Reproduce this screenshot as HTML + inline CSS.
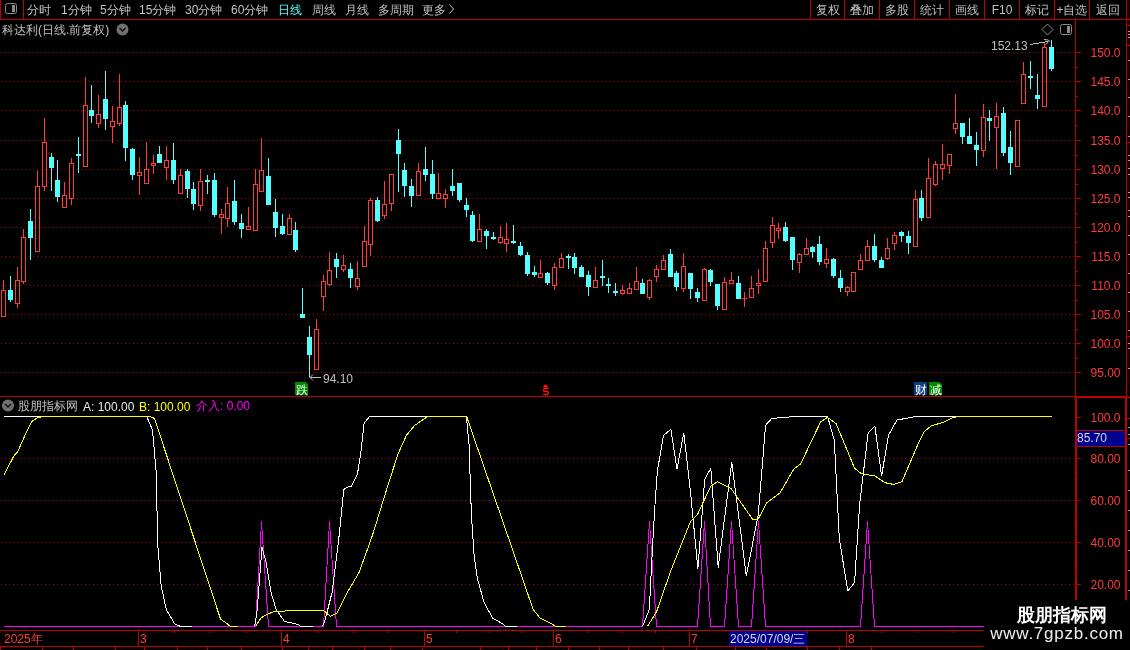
<!DOCTYPE html>
<html><head><meta charset="utf-8"><style>
html,body{margin:0;padding:0;background:#000;width:1130px;height:650px;overflow:hidden}
body{position:relative;font-family:"Liberation Sans",sans-serif;font-size:12px;color:#c0c0c0}
svg{position:absolute;left:0;top:0;will-change:transform} text{font-family:"Liberation Sans",sans-serif}
.t{position:absolute;white-space:nowrap;line-height:12px}
</style></head><body>
<svg width="1130" height="650" viewBox="0 0 1130 650" shape-rendering="crispEdges">
<g><line x1="1" y1="52.5" x2="1075" y2="52.5" stroke="#b40000" stroke-width="1" stroke-dasharray="1 3"/>
<line x1="1" y1="81.5" x2="1075" y2="81.5" stroke="#b40000" stroke-width="1" stroke-dasharray="1 3"/>
<line x1="1" y1="110.5" x2="1075" y2="110.5" stroke="#b40000" stroke-width="1" stroke-dasharray="1 3"/>
<line x1="1" y1="140.5" x2="1075" y2="140.5" stroke="#b40000" stroke-width="1" stroke-dasharray="1 3"/>
<line x1="1" y1="169.5" x2="1075" y2="169.5" stroke="#b40000" stroke-width="1" stroke-dasharray="1 3"/>
<line x1="1" y1="198.5" x2="1075" y2="198.5" stroke="#b40000" stroke-width="1" stroke-dasharray="1 3"/>
<line x1="1" y1="227.5" x2="1075" y2="227.5" stroke="#b40000" stroke-width="1" stroke-dasharray="1 3"/>
<line x1="1" y1="256.5" x2="1075" y2="256.5" stroke="#b40000" stroke-width="1" stroke-dasharray="1 3"/>
<line x1="1" y1="285.5" x2="1075" y2="285.5" stroke="#b40000" stroke-width="1" stroke-dasharray="1 3"/>
<line x1="1" y1="314.5" x2="1075" y2="314.5" stroke="#b40000" stroke-width="1" stroke-dasharray="1 3"/>
<line x1="1" y1="343.5" x2="1075" y2="343.5" stroke="#b40000" stroke-width="1" stroke-dasharray="1 3"/>
<line x1="1" y1="372.5" x2="1075" y2="372.5" stroke="#b40000" stroke-width="1" stroke-dasharray="1 3"/>
<line x1="1" y1="458.5" x2="1075" y2="458.5" stroke="#b40000" stroke-width="1" stroke-dasharray="1 3"/>
<line x1="1" y1="500.5" x2="1075" y2="500.5" stroke="#b40000" stroke-width="1" stroke-dasharray="1 3"/>
<line x1="1" y1="542.5" x2="1075" y2="542.5" stroke="#b40000" stroke-width="1" stroke-dasharray="1 3"/>
<line x1="1" y1="584.5" x2="1075" y2="584.5" stroke="#b40000" stroke-width="1" stroke-dasharray="1 3"/>
<rect x="3" y="280" width="1" height="10" fill="#ff3c3c"/>
<rect x="1.5" y="290.5" width="4" height="26" fill="none" stroke="#ff3c3c" stroke-width="1"/>
<rect x="10" y="276" width="1" height="26" fill="#54ffff"/>
<rect x="8" y="290" width="5" height="10" fill="#54ffff"/>
<rect x="17" y="267" width="1" height="13" fill="#ff3c3c"/>
<rect x="17" y="303" width="1" height="5" fill="#ff3c3c"/>
<rect x="15.5" y="280.5" width="4" height="23" fill="none" stroke="#ff3c3c" stroke-width="1"/>
<rect x="23" y="229" width="1" height="8" fill="#ff3c3c"/>
<rect x="23" y="281" width="1" height="3" fill="#ff3c3c"/>
<rect x="21.5" y="237.5" width="4" height="44" fill="none" stroke="#ff3c3c" stroke-width="1"/>
<rect x="30" y="209" width="1" height="51" fill="#54ffff"/>
<rect x="28" y="221" width="5" height="17" fill="#54ffff"/>
<rect x="37" y="171" width="1" height="15" fill="#ff3c3c"/>
<rect x="35.5" y="186.5" width="4" height="65" fill="none" stroke="#ff3c3c" stroke-width="1"/>
<rect x="44" y="118" width="1" height="24" fill="#ff3c3c"/>
<rect x="44" y="186" width="1" height="5" fill="#ff3c3c"/>
<rect x="42.5" y="142.5" width="4" height="44" fill="none" stroke="#ff3c3c" stroke-width="1"/>
<rect x="51" y="153" width="1" height="38" fill="#54ffff"/>
<rect x="49" y="157" width="5" height="11" fill="#54ffff"/>
<rect x="57" y="160" width="1" height="42" fill="#54ffff"/>
<rect x="55" y="180" width="5" height="17" fill="#54ffff"/>
<rect x="64" y="182" width="1" height="13" fill="#ff3c3c"/>
<rect x="62.5" y="195.5" width="4" height="12" fill="none" stroke="#ff3c3c" stroke-width="1"/>
<rect x="71" y="158" width="1" height="5" fill="#ff3c3c"/>
<rect x="71" y="198" width="1" height="7" fill="#ff3c3c"/>
<rect x="69.5" y="163.5" width="4" height="35" fill="none" stroke="#ff3c3c" stroke-width="1"/>
<rect x="78" y="137" width="1" height="36" fill="#54ffff"/>
<rect x="76" y="154" width="5" height="2" fill="#54ffff"/>
<rect x="85" y="77" width="1" height="28" fill="#ff3c3c"/>
<rect x="83.5" y="105.5" width="4" height="61" fill="none" stroke="#ff3c3c" stroke-width="1"/>
<rect x="91" y="85" width="1" height="38" fill="#54ffff"/>
<rect x="89" y="110" width="5" height="6" fill="#54ffff"/>
<rect x="98" y="95" width="1" height="19" fill="#ff3c3c"/>
<rect x="98" y="123" width="1" height="5" fill="#ff3c3c"/>
<rect x="96.5" y="114.5" width="4" height="9" fill="none" stroke="#ff3c3c" stroke-width="1"/>
<rect x="105" y="71" width="1" height="59" fill="#54ffff"/>
<rect x="103" y="99" width="5" height="20" fill="#54ffff"/>
<rect x="112" y="106" width="1" height="15" fill="#ff3c3c"/>
<rect x="112" y="126" width="1" height="17" fill="#ff3c3c"/>
<rect x="110.5" y="121.5" width="4" height="5" fill="none" stroke="#ff3c3c" stroke-width="1"/>
<rect x="119" y="74" width="1" height="33" fill="#ff3c3c"/>
<rect x="119" y="123" width="1" height="3" fill="#ff3c3c"/>
<rect x="117.5" y="107.5" width="4" height="16" fill="none" stroke="#ff3c3c" stroke-width="1"/>
<rect x="125" y="101" width="1" height="60" fill="#54ffff"/>
<rect x="123" y="105" width="5" height="43" fill="#54ffff"/>
<rect x="132" y="148" width="1" height="32" fill="#54ffff"/>
<rect x="130" y="149" width="5" height="26" fill="#54ffff"/>
<rect x="139" y="157" width="1" height="15" fill="#ff3c3c"/>
<rect x="139" y="175" width="1" height="20" fill="#ff3c3c"/>
<rect x="137.5" y="172.5" width="4" height="3" fill="none" stroke="#ff3c3c" stroke-width="1"/>
<rect x="146" y="142" width="1" height="27" fill="#ff3c3c"/>
<rect x="144.5" y="169.5" width="4" height="14" fill="none" stroke="#ff3c3c" stroke-width="1"/>
<rect x="153" y="155" width="1" height="8" fill="#ff3c3c"/>
<rect x="153" y="165" width="1" height="9" fill="#ff3c3c"/>
<rect x="151.5" y="163.5" width="4" height="2" fill="none" stroke="#ff3c3c" stroke-width="1"/>
<rect x="159" y="146" width="1" height="17" fill="#54ffff"/>
<rect x="157" y="154" width="5" height="9" fill="#54ffff"/>
<rect x="166" y="146" width="1" height="14" fill="#ff3c3c"/>
<rect x="166" y="167" width="1" height="13" fill="#ff3c3c"/>
<rect x="164.5" y="160.5" width="4" height="7" fill="none" stroke="#ff3c3c" stroke-width="1"/>
<rect x="173" y="143" width="1" height="41" fill="#54ffff"/>
<rect x="171" y="160" width="5" height="20" fill="#54ffff"/>
<rect x="180" y="169" width="1" height="6" fill="#ff3c3c"/>
<rect x="178.5" y="175.5" width="4" height="18" fill="none" stroke="#ff3c3c" stroke-width="1"/>
<rect x="187" y="169" width="1" height="29" fill="#54ffff"/>
<rect x="185" y="171" width="5" height="18" fill="#54ffff"/>
<rect x="193" y="182" width="1" height="28" fill="#54ffff"/>
<rect x="191" y="189" width="5" height="15" fill="#54ffff"/>
<rect x="200" y="169" width="1" height="12" fill="#ff3c3c"/>
<rect x="200" y="205" width="1" height="6" fill="#ff3c3c"/>
<rect x="198.5" y="181.5" width="4" height="24" fill="none" stroke="#ff3c3c" stroke-width="1"/>
<rect x="207" y="175" width="1" height="19" fill="#54ffff"/>
<rect x="205" y="180" width="5" height="2" fill="#54ffff"/>
<rect x="214" y="173" width="1" height="44" fill="#54ffff"/>
<rect x="212" y="180" width="5" height="35" fill="#54ffff"/>
<rect x="221" y="209" width="1" height="5" fill="#ff3c3c"/>
<rect x="221" y="217" width="1" height="17" fill="#ff3c3c"/>
<rect x="219.5" y="214.5" width="4" height="3" fill="none" stroke="#ff3c3c" stroke-width="1"/>
<rect x="227" y="187" width="1" height="16" fill="#ff3c3c"/>
<rect x="227" y="218" width="1" height="9" fill="#ff3c3c"/>
<rect x="225.5" y="203.5" width="4" height="15" fill="none" stroke="#ff3c3c" stroke-width="1"/>
<rect x="234" y="180" width="1" height="45" fill="#54ffff"/>
<rect x="232" y="201" width="5" height="21" fill="#54ffff"/>
<rect x="241" y="214" width="1" height="24" fill="#54ffff"/>
<rect x="239" y="223" width="5" height="6" fill="#54ffff"/>
<rect x="248" y="207" width="1" height="19" fill="#ff3c3c"/>
<rect x="246.5" y="226.5" width="4" height="3" fill="none" stroke="#ff3c3c" stroke-width="1"/>
<rect x="255" y="169" width="1" height="15" fill="#ff3c3c"/>
<rect x="255" y="230" width="1" height="1" fill="#ff3c3c"/>
<rect x="253.5" y="184.5" width="4" height="46" fill="none" stroke="#ff3c3c" stroke-width="1"/>
<rect x="261" y="138" width="1" height="32" fill="#ff3c3c"/>
<rect x="259.5" y="170.5" width="4" height="21" fill="none" stroke="#ff3c3c" stroke-width="1"/>
<rect x="268" y="158" width="1" height="47" fill="#54ffff"/>
<rect x="266" y="176" width="5" height="29" fill="#54ffff"/>
<rect x="275" y="199" width="1" height="38" fill="#54ffff"/>
<rect x="273" y="212" width="5" height="16" fill="#54ffff"/>
<rect x="282" y="214" width="1" height="21" fill="#54ffff"/>
<rect x="280" y="226" width="5" height="8" fill="#54ffff"/>
<rect x="289" y="214" width="1" height="4" fill="#ff3c3c"/>
<rect x="287.5" y="218.5" width="4" height="16" fill="none" stroke="#ff3c3c" stroke-width="1"/>
<rect x="295" y="222" width="1" height="30" fill="#54ffff"/>
<rect x="293" y="230" width="5" height="20" fill="#54ffff"/>
<rect x="302" y="288" width="1" height="30" fill="#54ffff"/>
<rect x="300" y="314" width="5" height="4" fill="#54ffff"/>
<rect x="309" y="326" width="1" height="51" fill="#54ffff"/>
<rect x="307" y="337" width="5" height="18" fill="#54ffff"/>
<rect x="316" y="319" width="1" height="10" fill="#ff3c3c"/>
<rect x="314.5" y="329.5" width="4" height="40" fill="none" stroke="#ff3c3c" stroke-width="1"/>
<rect x="323" y="275" width="1" height="6" fill="#ff3c3c"/>
<rect x="323" y="296" width="1" height="15" fill="#ff3c3c"/>
<rect x="321.5" y="281.5" width="4" height="15" fill="none" stroke="#ff3c3c" stroke-width="1"/>
<rect x="329" y="252" width="1" height="18" fill="#ff3c3c"/>
<rect x="329" y="284" width="1" height="2" fill="#ff3c3c"/>
<rect x="327.5" y="270.5" width="4" height="14" fill="none" stroke="#ff3c3c" stroke-width="1"/>
<rect x="336" y="253" width="1" height="25" fill="#54ffff"/>
<rect x="334" y="259" width="5" height="8" fill="#54ffff"/>
<rect x="343" y="255" width="1" height="10" fill="#ff3c3c"/>
<rect x="343" y="269" width="1" height="3" fill="#ff3c3c"/>
<rect x="341.5" y="265.5" width="4" height="4" fill="none" stroke="#ff3c3c" stroke-width="1"/>
<rect x="350" y="263" width="1" height="25" fill="#54ffff"/>
<rect x="348" y="269" width="5" height="9" fill="#54ffff"/>
<rect x="357" y="261" width="1" height="17" fill="#ff3c3c"/>
<rect x="357" y="286" width="1" height="4" fill="#ff3c3c"/>
<rect x="355.5" y="278.5" width="4" height="8" fill="none" stroke="#ff3c3c" stroke-width="1"/>
<rect x="364" y="226" width="1" height="15" fill="#ff3c3c"/>
<rect x="362.5" y="241.5" width="4" height="25" fill="none" stroke="#ff3c3c" stroke-width="1"/>
<rect x="370" y="198" width="1" height="2" fill="#ff3c3c"/>
<rect x="370" y="244" width="1" height="12" fill="#ff3c3c"/>
<rect x="368.5" y="200.5" width="4" height="44" fill="none" stroke="#ff3c3c" stroke-width="1"/>
<rect x="377" y="197" width="1" height="25" fill="#54ffff"/>
<rect x="375" y="200" width="5" height="21" fill="#54ffff"/>
<rect x="384" y="181" width="1" height="23" fill="#ff3c3c"/>
<rect x="384" y="215" width="1" height="4" fill="#ff3c3c"/>
<rect x="382.5" y="204.5" width="4" height="11" fill="none" stroke="#ff3c3c" stroke-width="1"/>
<rect x="391" y="203" width="1" height="8" fill="#ff3c3c"/>
<rect x="389.5" y="174.5" width="4" height="29" fill="none" stroke="#ff3c3c" stroke-width="1"/>
<rect x="398" y="129" width="1" height="63" fill="#54ffff"/>
<rect x="396" y="140" width="5" height="14" fill="#54ffff"/>
<rect x="404" y="163" width="1" height="34" fill="#54ffff"/>
<rect x="402" y="170" width="5" height="16" fill="#54ffff"/>
<rect x="411" y="179" width="1" height="28" fill="#54ffff"/>
<rect x="409" y="186" width="5" height="10" fill="#54ffff"/>
<rect x="418" y="163" width="1" height="8" fill="#ff3c3c"/>
<rect x="416.5" y="171.5" width="4" height="24" fill="none" stroke="#ff3c3c" stroke-width="1"/>
<rect x="425" y="147" width="1" height="34" fill="#54ffff"/>
<rect x="423" y="169" width="5" height="6" fill="#54ffff"/>
<rect x="432" y="160" width="1" height="39" fill="#54ffff"/>
<rect x="430" y="174" width="5" height="20" fill="#54ffff"/>
<rect x="438" y="173" width="1" height="20" fill="#ff3c3c"/>
<rect x="436.5" y="193.5" width="4" height="5" fill="none" stroke="#ff3c3c" stroke-width="1"/>
<rect x="445" y="189" width="1" height="5" fill="#ff3c3c"/>
<rect x="445" y="198" width="1" height="10" fill="#ff3c3c"/>
<rect x="443.5" y="194.5" width="4" height="4" fill="none" stroke="#ff3c3c" stroke-width="1"/>
<rect x="452" y="169" width="1" height="27" fill="#54ffff"/>
<rect x="450" y="186" width="5" height="5" fill="#54ffff"/>
<rect x="459" y="183" width="1" height="19" fill="#54ffff"/>
<rect x="457" y="183" width="5" height="17" fill="#54ffff"/>
<rect x="466" y="198" width="1" height="19" fill="#54ffff"/>
<rect x="464" y="205" width="5" height="5" fill="#54ffff"/>
<rect x="472" y="211" width="1" height="31" fill="#54ffff"/>
<rect x="470" y="215" width="5" height="26" fill="#54ffff"/>
<rect x="479" y="214" width="1" height="15" fill="#ff3c3c"/>
<rect x="477.5" y="229.5" width="4" height="12" fill="none" stroke="#ff3c3c" stroke-width="1"/>
<rect x="486" y="229" width="1" height="20" fill="#54ffff"/>
<rect x="484" y="231" width="5" height="5" fill="#54ffff"/>
<rect x="493" y="232" width="1" height="8" fill="#54ffff"/>
<rect x="491" y="237" width="5" height="2" fill="#54ffff"/>
<rect x="500" y="226" width="1" height="11" fill="#ff3c3c"/>
<rect x="500" y="242" width="1" height="2" fill="#ff3c3c"/>
<rect x="498.5" y="237.5" width="4" height="5" fill="none" stroke="#ff3c3c" stroke-width="1"/>
<rect x="506" y="223" width="1" height="16" fill="#ff3c3c"/>
<rect x="506" y="243" width="1" height="9" fill="#ff3c3c"/>
<rect x="504.5" y="239.5" width="4" height="4" fill="none" stroke="#ff3c3c" stroke-width="1"/>
<rect x="513" y="225" width="1" height="19" fill="#54ffff"/>
<rect x="511" y="241" width="5" height="2" fill="#54ffff"/>
<rect x="520" y="242" width="1" height="14" fill="#54ffff"/>
<rect x="518" y="246" width="5" height="9" fill="#54ffff"/>
<rect x="527" y="252" width="1" height="24" fill="#54ffff"/>
<rect x="525" y="255" width="5" height="19" fill="#54ffff"/>
<rect x="534" y="266" width="1" height="11" fill="#54ffff"/>
<rect x="532" y="272" width="5" height="3" fill="#54ffff"/>
<rect x="540" y="260" width="1" height="13" fill="#ff3c3c"/>
<rect x="538.5" y="273.5" width="4" height="4" fill="none" stroke="#ff3c3c" stroke-width="1"/>
<rect x="547" y="272" width="1" height="13" fill="#54ffff"/>
<rect x="545" y="273" width="5" height="10" fill="#54ffff"/>
<rect x="554" y="263" width="1" height="4" fill="#ff3c3c"/>
<rect x="554" y="285" width="1" height="5" fill="#ff3c3c"/>
<rect x="552.5" y="267.5" width="4" height="18" fill="none" stroke="#ff3c3c" stroke-width="1"/>
<rect x="561" y="253" width="1" height="5" fill="#ff3c3c"/>
<rect x="559.5" y="258.5" width="4" height="9" fill="none" stroke="#ff3c3c" stroke-width="1"/>
<rect x="568" y="254" width="1" height="15" fill="#54ffff"/>
<rect x="566" y="256" width="5" height="2" fill="#54ffff"/>
<rect x="574" y="253" width="1" height="21" fill="#54ffff"/>
<rect x="572" y="257" width="5" height="11" fill="#54ffff"/>
<rect x="581" y="265" width="1" height="12" fill="#54ffff"/>
<rect x="579" y="267" width="5" height="10" fill="#54ffff"/>
<rect x="588" y="271" width="1" height="25" fill="#54ffff"/>
<rect x="586" y="275" width="5" height="12" fill="#54ffff"/>
<rect x="595" y="267" width="1" height="13" fill="#ff3c3c"/>
<rect x="593.5" y="280.5" width="4" height="7" fill="none" stroke="#ff3c3c" stroke-width="1"/>
<rect x="602" y="260" width="1" height="26" fill="#54ffff"/>
<rect x="600" y="276" width="5" height="2" fill="#54ffff"/>
<rect x="608" y="278" width="1" height="15" fill="#54ffff"/>
<rect x="606" y="284" width="5" height="2" fill="#54ffff"/>
<rect x="615" y="283" width="1" height="13" fill="#54ffff"/>
<rect x="613" y="291" width="5" height="2" fill="#54ffff"/>
<rect x="622" y="285" width="1" height="5" fill="#ff3c3c"/>
<rect x="622" y="293" width="1" height="2" fill="#ff3c3c"/>
<rect x="620.5" y="290.5" width="4" height="3" fill="none" stroke="#ff3c3c" stroke-width="1"/>
<rect x="629" y="283" width="1" height="5" fill="#ff3c3c"/>
<rect x="627.5" y="288.5" width="4" height="5" fill="none" stroke="#ff3c3c" stroke-width="1"/>
<rect x="636" y="267" width="1" height="14" fill="#ff3c3c"/>
<rect x="636" y="289" width="1" height="1" fill="#ff3c3c"/>
<rect x="634.5" y="281.5" width="4" height="8" fill="none" stroke="#ff3c3c" stroke-width="1"/>
<rect x="642" y="279" width="1" height="15" fill="#54ffff"/>
<rect x="640" y="283" width="5" height="11" fill="#54ffff"/>
<rect x="649" y="279" width="1" height="1" fill="#ff3c3c"/>
<rect x="649" y="297" width="1" height="3" fill="#ff3c3c"/>
<rect x="647.5" y="280.5" width="4" height="17" fill="none" stroke="#ff3c3c" stroke-width="1"/>
<rect x="656" y="265" width="1" height="4" fill="#ff3c3c"/>
<rect x="656" y="276" width="1" height="6" fill="#ff3c3c"/>
<rect x="654.5" y="269.5" width="4" height="7" fill="none" stroke="#ff3c3c" stroke-width="1"/>
<rect x="663" y="255" width="1" height="5" fill="#ff3c3c"/>
<rect x="663" y="269" width="1" height="1" fill="#ff3c3c"/>
<rect x="661.5" y="260.5" width="4" height="9" fill="none" stroke="#ff3c3c" stroke-width="1"/>
<rect x="670" y="249" width="1" height="28" fill="#54ffff"/>
<rect x="668" y="254" width="5" height="23" fill="#54ffff"/>
<rect x="676" y="271" width="1" height="20" fill="#54ffff"/>
<rect x="674" y="273" width="5" height="14" fill="#54ffff"/>
<rect x="683" y="253" width="1" height="13" fill="#ff3c3c"/>
<rect x="683" y="288" width="1" height="4" fill="#ff3c3c"/>
<rect x="681.5" y="266.5" width="4" height="22" fill="none" stroke="#ff3c3c" stroke-width="1"/>
<rect x="690" y="273" width="1" height="26" fill="#54ffff"/>
<rect x="688" y="273" width="5" height="16" fill="#54ffff"/>
<rect x="697" y="288" width="1" height="14" fill="#54ffff"/>
<rect x="695" y="292" width="5" height="6" fill="#54ffff"/>
<rect x="704" y="268" width="1" height="1" fill="#ff3c3c"/>
<rect x="702.5" y="269.5" width="4" height="31" fill="none" stroke="#ff3c3c" stroke-width="1"/>
<rect x="710" y="269" width="1" height="17" fill="#54ffff"/>
<rect x="708" y="270" width="5" height="12" fill="#54ffff"/>
<rect x="717" y="284" width="1" height="26" fill="#54ffff"/>
<rect x="715" y="284" width="5" height="22" fill="#54ffff"/>
<rect x="724" y="277" width="1" height="5" fill="#ff3c3c"/>
<rect x="722.5" y="282.5" width="4" height="27" fill="none" stroke="#ff3c3c" stroke-width="1"/>
<rect x="731" y="272" width="1" height="8" fill="#ff3c3c"/>
<rect x="729.5" y="280.5" width="4" height="3" fill="none" stroke="#ff3c3c" stroke-width="1"/>
<rect x="738" y="276" width="1" height="23" fill="#54ffff"/>
<rect x="736" y="283" width="5" height="16" fill="#54ffff"/>
<rect x="744" y="292" width="1" height="6" fill="#ff3c3c"/>
<rect x="744" y="298" width="1" height="9" fill="#ff3c3c"/>
<rect x="742" y="298" width="5" height="1" fill="#ff3c3c"/>
<rect x="751" y="276" width="1" height="12" fill="#ff3c3c"/>
<rect x="749.5" y="288.5" width="4" height="9" fill="none" stroke="#ff3c3c" stroke-width="1"/>
<rect x="758" y="269" width="1" height="14" fill="#ff3c3c"/>
<rect x="758" y="285" width="1" height="9" fill="#ff3c3c"/>
<rect x="756.5" y="283.5" width="4" height="2" fill="none" stroke="#ff3c3c" stroke-width="1"/>
<rect x="765" y="241" width="1" height="7" fill="#ff3c3c"/>
<rect x="763.5" y="248.5" width="4" height="33" fill="none" stroke="#ff3c3c" stroke-width="1"/>
<rect x="772" y="217" width="1" height="8" fill="#ff3c3c"/>
<rect x="772" y="242" width="1" height="6" fill="#ff3c3c"/>
<rect x="770.5" y="225.5" width="4" height="17" fill="none" stroke="#ff3c3c" stroke-width="1"/>
<rect x="778" y="223" width="1" height="5" fill="#ff3c3c"/>
<rect x="778" y="230" width="1" height="9" fill="#ff3c3c"/>
<rect x="776.5" y="228.5" width="4" height="2" fill="none" stroke="#ff3c3c" stroke-width="1"/>
<rect x="785" y="222" width="1" height="20" fill="#54ffff"/>
<rect x="783" y="227" width="5" height="14" fill="#54ffff"/>
<rect x="792" y="237" width="1" height="33" fill="#54ffff"/>
<rect x="790" y="237" width="5" height="23" fill="#54ffff"/>
<rect x="799" y="253" width="1" height="1" fill="#ff3c3c"/>
<rect x="799" y="262" width="1" height="11" fill="#ff3c3c"/>
<rect x="797.5" y="254.5" width="4" height="8" fill="none" stroke="#ff3c3c" stroke-width="1"/>
<rect x="806" y="238" width="1" height="10" fill="#ff3c3c"/>
<rect x="804.5" y="248.5" width="4" height="6" fill="none" stroke="#ff3c3c" stroke-width="1"/>
<rect x="812" y="246" width="1" height="12" fill="#54ffff"/>
<rect x="810" y="247" width="5" height="5" fill="#54ffff"/>
<rect x="819" y="236" width="1" height="29" fill="#54ffff"/>
<rect x="817" y="244" width="5" height="18" fill="#54ffff"/>
<rect x="826" y="248" width="1" height="11" fill="#ff3c3c"/>
<rect x="826" y="263" width="1" height="5" fill="#ff3c3c"/>
<rect x="824.5" y="259.5" width="4" height="4" fill="none" stroke="#ff3c3c" stroke-width="1"/>
<rect x="833" y="258" width="1" height="20" fill="#54ffff"/>
<rect x="831" y="259" width="5" height="17" fill="#54ffff"/>
<rect x="840" y="270" width="1" height="22" fill="#54ffff"/>
<rect x="838" y="278" width="5" height="10" fill="#54ffff"/>
<rect x="847" y="286" width="1" height="1" fill="#ff3c3c"/>
<rect x="847" y="291" width="1" height="5" fill="#ff3c3c"/>
<rect x="845.5" y="287.5" width="4" height="4" fill="none" stroke="#ff3c3c" stroke-width="1"/>
<rect x="851.5" y="272.5" width="4" height="19" fill="none" stroke="#ff3c3c" stroke-width="1"/>
<rect x="860" y="254" width="1" height="6" fill="#ff3c3c"/>
<rect x="860" y="269" width="1" height="1" fill="#ff3c3c"/>
<rect x="858.5" y="260.5" width="4" height="9" fill="none" stroke="#ff3c3c" stroke-width="1"/>
<rect x="867" y="240" width="1" height="6" fill="#ff3c3c"/>
<rect x="865.5" y="246.5" width="4" height="14" fill="none" stroke="#ff3c3c" stroke-width="1"/>
<rect x="874" y="234" width="1" height="28" fill="#54ffff"/>
<rect x="872" y="246" width="5" height="14" fill="#54ffff"/>
<rect x="881" y="257" width="1" height="11" fill="#54ffff"/>
<rect x="879" y="260" width="5" height="8" fill="#54ffff"/>
<rect x="887" y="238" width="1" height="10" fill="#ff3c3c"/>
<rect x="887" y="258" width="1" height="2" fill="#ff3c3c"/>
<rect x="885.5" y="248.5" width="4" height="10" fill="none" stroke="#ff3c3c" stroke-width="1"/>
<rect x="894" y="232" width="1" height="3" fill="#ff3c3c"/>
<rect x="894" y="243" width="1" height="7" fill="#ff3c3c"/>
<rect x="892.5" y="235.5" width="4" height="8" fill="none" stroke="#ff3c3c" stroke-width="1"/>
<rect x="901" y="231" width="1" height="11" fill="#54ffff"/>
<rect x="899" y="232" width="5" height="4" fill="#54ffff"/>
<rect x="908" y="231" width="1" height="23" fill="#54ffff"/>
<rect x="906" y="236" width="5" height="7" fill="#54ffff"/>
<rect x="915" y="190" width="1" height="9" fill="#ff3c3c"/>
<rect x="913.5" y="199.5" width="4" height="47" fill="none" stroke="#ff3c3c" stroke-width="1"/>
<rect x="921" y="190" width="1" height="31" fill="#54ffff"/>
<rect x="919" y="198" width="5" height="20" fill="#54ffff"/>
<rect x="928" y="158" width="1" height="20" fill="#ff3c3c"/>
<rect x="926.5" y="178.5" width="4" height="39" fill="none" stroke="#ff3c3c" stroke-width="1"/>
<rect x="935" y="161" width="1" height="3" fill="#ff3c3c"/>
<rect x="935" y="184" width="1" height="2" fill="#ff3c3c"/>
<rect x="933.5" y="164.5" width="4" height="20" fill="none" stroke="#ff3c3c" stroke-width="1"/>
<rect x="942" y="144" width="1" height="20" fill="#ff3c3c"/>
<rect x="942" y="168" width="1" height="12" fill="#ff3c3c"/>
<rect x="940.5" y="164.5" width="4" height="4" fill="none" stroke="#ff3c3c" stroke-width="1"/>
<rect x="949" y="165" width="1" height="9" fill="#ff3c3c"/>
<rect x="947.5" y="154.5" width="4" height="11" fill="none" stroke="#ff3c3c" stroke-width="1"/>
<rect x="955" y="94" width="1" height="29" fill="#ff3c3c"/>
<rect x="955" y="128" width="1" height="6" fill="#ff3c3c"/>
<rect x="953.5" y="123.5" width="4" height="5" fill="none" stroke="#ff3c3c" stroke-width="1"/>
<rect x="962" y="123" width="1" height="21" fill="#54ffff"/>
<rect x="960" y="123" width="5" height="14" fill="#54ffff"/>
<rect x="969" y="118" width="1" height="26" fill="#54ffff"/>
<rect x="967" y="136" width="5" height="8" fill="#54ffff"/>
<rect x="976" y="132" width="1" height="34" fill="#54ffff"/>
<rect x="974" y="145" width="5" height="5" fill="#54ffff"/>
<rect x="983" y="104" width="1" height="13" fill="#ff3c3c"/>
<rect x="983" y="150" width="1" height="7" fill="#ff3c3c"/>
<rect x="981.5" y="117.5" width="4" height="33" fill="none" stroke="#ff3c3c" stroke-width="1"/>
<rect x="989" y="110" width="1" height="31" fill="#54ffff"/>
<rect x="987" y="118" width="5" height="3" fill="#54ffff"/>
<rect x="996" y="103" width="1" height="13" fill="#ff3c3c"/>
<rect x="996" y="127" width="1" height="42" fill="#ff3c3c"/>
<rect x="994.5" y="116.5" width="4" height="11" fill="none" stroke="#ff3c3c" stroke-width="1"/>
<rect x="1003" y="107" width="1" height="49" fill="#54ffff"/>
<rect x="1001" y="113" width="5" height="40" fill="#54ffff"/>
<rect x="1010" y="131" width="1" height="44" fill="#54ffff"/>
<rect x="1008" y="147" width="5" height="16" fill="#54ffff"/>
<rect x="1015.5" y="120.5" width="4" height="46" fill="none" stroke="#ff3c3c" stroke-width="1"/>
<rect x="1023" y="62" width="1" height="12" fill="#ff3c3c"/>
<rect x="1021.5" y="74.5" width="4" height="29" fill="none" stroke="#ff3c3c" stroke-width="1"/>
<rect x="1030" y="61" width="1" height="28" fill="#54ffff"/>
<rect x="1028" y="76" width="5" height="2" fill="#54ffff"/>
<rect x="1037" y="74" width="1" height="35" fill="#54ffff"/>
<rect x="1035" y="95" width="5" height="4" fill="#54ffff"/>
<rect x="1044" y="43" width="1" height="4" fill="#ff3c3c"/>
<rect x="1044" y="106" width="1" height="1" fill="#ff3c3c"/>
<rect x="1042.5" y="47.5" width="4" height="59" fill="none" stroke="#ff3c3c" stroke-width="1"/>
<rect x="1051" y="40" width="1" height="31" fill="#54ffff"/>
<rect x="1049" y="47" width="5" height="22" fill="#54ffff"/>
<polyline points="3.5,626.5 255.5,626.5 261.5,522.0 268.5,626.5 323.5,626.5 329.5,522.0 336.5,626.5 642.5,626.5 649.5,522.0 656.5,626.5 697.5,626.5 704.5,522.0 710.5,626.5 724.5,626.5 731.5,522.0 738.5,626.5 751.5,626.5 758.5,522.0 765.5,626.5 860.5,626.5 867.5,522.0 874.5,626.5 1051.5,626.5" fill="none" stroke="#ff00ff" stroke-width="1" stroke-linejoin="round"/>
<polyline points="3.5,416.0 146.5,416.0 152.5,430.0 156.1,471.0 157.8,545.0 161.2,586.0 166.3,609.6 174.7,623.8 180.5,626.5 191.5,626.5" fill="none" stroke="#ffffff" stroke-width="1" stroke-linejoin="round"/>
<polyline points="254.5,626.5 256.9,613.0 262.0,547.0 266.0,562.0 271.1,592.7 276.2,609.6 284.5,621.4 298.2,624.5 300.5,626.5 312.5,626.5" fill="none" stroke="#ffffff" stroke-width="1" stroke-linejoin="round"/>
<polyline points="322.5,626.5 325.2,619.7 332.0,592.7 338.8,538.6 343.8,489.5 347.2,487.1 351.5,486.1 357.4,474.3 360.7,454.0 364.1,423.5 369.2,416.8 382.7,416.1 466.3,416.1 469.0,443.8 471.4,514.9 474.1,555.5 477.5,579.0 484.2,602.8 492.6,618.0 502.8,624.0 505.5,626.5 516.5,626.5" fill="none" stroke="#ffffff" stroke-width="1" stroke-linejoin="round"/>
<polyline points="642.5,626.5 649.3,609.6 652.6,545.3 655.0,504.7 657.4,470.9 663.5,435.4 670.9,429.3 677.0,469.2 683.8,433.0 690.5,492.0 697.9,569.0 704.7,479.4 710.8,468.2 718.2,567.3 731.8,462.4 746.3,575.8 758.2,514.9 765.6,425.2 771.7,418.5 798.8,416.1 827.5,416.1 834.3,440.4 839.3,538.6 847.8,591.0 854.6,582.5 859.6,504.7 868.1,433.0 874.9,426.2 881.6,476.0 888.4,435.4 896.9,420.1 913.8,416.8 1051.5,416.5" fill="none" stroke="#ffffff" stroke-width="1" stroke-linejoin="round"/>
<polyline points="3.9,475.0 14.0,455.7 17.4,452.3 24.2,437.0 31.5,421.8 37.7,417.4 47.9,416.1 149.3,416.1 154.5,418.5 220.5,619.0 227.2,623.8 230.5,626.5 238.0,626.5" fill="none" stroke="#ffff00" stroke-width="1" stroke-linejoin="round"/>
<polyline points="255.5,626.5 260.9,618.0 267.7,614.0 273.2,612.0 285.2,611.0 323.5,610.3 330.3,616.4 337.1,613.0 347.2,592.7 359.1,572.4 372.5,535.2 386.1,491.2 398.0,454.0 406.4,435.4 414.9,425.2 428.4,416.1 466.5,416.1 533.2,609.6 540.0,618.0 551.8,623.8 555.5,626.5 565.5,626.5" fill="none" stroke="#ffff00" stroke-width="1" stroke-linejoin="round"/>
<polyline points="647.5,626.5 656.7,611.3 670.2,572.4 690.5,521.6 697.3,514.9 710.8,486.1 717.5,481.7 731.1,488.5 753.1,520.0 758.2,519.0 766.6,503.0 780.1,492.9 793.7,469.2 800.5,464.1 820.7,421.8 827.5,417.4 836.0,423.5 854.6,468.2 861.3,473.6 874.9,476.0 885.0,482.7 893.5,484.4 901.9,481.7 918.5,443.0 923.9,432.0 931.5,425.6 943.3,422.5 953.1,417.4 959.0,416.6 1051.5,416.6" fill="none" stroke="#ffff00" stroke-width="1" stroke-linejoin="round"/>
<rect x="0" y="19" width="1130" height="1" fill="#c00000"/>
<rect x="0" y="0" width="1" height="19" fill="#c00000"/>
<rect x="23" y="0" width="1" height="19" fill="#c00000"/>
<rect x="810" y="0" width="1" height="19" fill="#c00000"/>
<rect x="844" y="0" width="1" height="19" fill="#c00000"/>
<rect x="879" y="0" width="1" height="19" fill="#c00000"/>
<rect x="914" y="0" width="1" height="19" fill="#c00000"/>
<rect x="949" y="0" width="1" height="19" fill="#c00000"/>
<rect x="984" y="0" width="1" height="19" fill="#c00000"/>
<rect x="1019" y="0" width="1" height="19" fill="#c00000"/>
<rect x="1054" y="0" width="1" height="19" fill="#c00000"/>
<rect x="1089" y="0" width="1" height="19" fill="#c00000"/>
<rect x="1126" y="0" width="1" height="19" fill="#c00000"/>
<rect x="1075" y="19" width="1" height="377" fill="#c00000"/>
<rect x="1126" y="0" width="1" height="396" fill="#c00000"/>
<rect x="1075" y="396" width="2" height="204" fill="#c00000"/>
<rect x="1125" y="396" width="2" height="204" fill="#c00000"/>
<rect x="0" y="396" width="1075" height="1" fill="#c00000"/>
<rect x="1075" y="396" width="52" height="2" fill="#c00000"/>
<rect x="1127" y="397" width="3" height="1" fill="#c00000"/>
<rect x="1127" y="25" width="3" height="1" fill="#c00000"/>
<rect x="1127" y="45" width="3" height="1" fill="#c00000"/>
<rect x="1127" y="142" width="3" height="1" fill="#c00000"/>
<rect x="1127" y="336" width="3" height="1" fill="#c00000"/>
<rect x="1127" y="418" width="3" height="1" fill="#c00000"/>
<rect x="1127" y="438" width="3" height="1" fill="#c00000"/>
<rect x="1128" y="31" width="2" height="1" fill="#a0a0a0"/>
<rect x="1128" y="34" width="2" height="1" fill="#a0a0a0"/>
<rect x="1128" y="37" width="2" height="1" fill="#a0a0a0"/>
<rect x="1128" y="60" width="2" height="1" fill="#a0a0a0"/>
<rect x="1128" y="79" width="2" height="1" fill="#a0a0a0"/>
<rect x="1128" y="97" width="2" height="1" fill="#a0a0a0"/>
<rect x="1128" y="116" width="2" height="1" fill="#a0a0a0"/>
<rect x="1128" y="136" width="2" height="1" fill="#a0a0a0"/>
<rect x="1128" y="155" width="2" height="1" fill="#a0a0a0"/>
<rect x="1128" y="160" width="2" height="1" fill="#a0a0a0"/>
<rect x="1128" y="168" width="2" height="1" fill="#a0a0a0"/>
<rect x="1128" y="174" width="2" height="1" fill="#a0a0a0"/>
<rect x="1128" y="192" width="2" height="1" fill="#a0a0a0"/>
<rect x="1128" y="197" width="2" height="1" fill="#a0a0a0"/>
<rect x="1128" y="210" width="2" height="1" fill="#a0a0a0"/>
<rect x="1128" y="216" width="2" height="1" fill="#a0a0a0"/>
<rect x="1128" y="235" width="2" height="1" fill="#a0a0a0"/>
<rect x="1128" y="254" width="2" height="1" fill="#a0a0a0"/>
<rect x="1128" y="273" width="2" height="1" fill="#a0a0a0"/>
<rect x="1128" y="292" width="2" height="1" fill="#a0a0a0"/>
<rect x="1128" y="311" width="2" height="1" fill="#a0a0a0"/>
<rect x="1128" y="330" width="2" height="1" fill="#a0a0a0"/>
<rect x="1128" y="343" width="2" height="1" fill="#a0a0a0"/>
<rect x="1128" y="348" width="2" height="1" fill="#a0a0a0"/>
<rect x="1128" y="368" width="2" height="1" fill="#a0a0a0"/>
<rect x="1128" y="427" width="2" height="1" fill="#a0a0a0"/>
<rect x="1128" y="434" width="2" height="1" fill="#a0a0a0"/>
<rect x="1128" y="444" width="2" height="1" fill="#a0a0a0"/>
<rect x="1128" y="470" width="2" height="1" fill="#a0a0a0"/>
<rect x="1128" y="490" width="2" height="1" fill="#a0a0a0"/>
<rect x="1128" y="510" width="2" height="1" fill="#a0a0a0"/>
<rect x="1128" y="530" width="2" height="1" fill="#a0a0a0"/>
<rect x="1128" y="550" width="2" height="1" fill="#a0a0a0"/>
<rect x="1128" y="570" width="2" height="1" fill="#a0a0a0"/>
<rect x="1128" y="590" width="2" height="1" fill="#a0a0a0"/>
<rect x="1075" y="52" width="6" height="1" fill="#c00000"/>
<rect x="1075" y="67" width="3" height="1" fill="#c00000"/>
<rect x="1075" y="81" width="6" height="1" fill="#c00000"/>
<rect x="1075" y="96" width="3" height="1" fill="#c00000"/>
<rect x="1075" y="110" width="6" height="1" fill="#c00000"/>
<rect x="1075" y="125" width="3" height="1" fill="#c00000"/>
<rect x="1075" y="140" width="6" height="1" fill="#c00000"/>
<rect x="1075" y="155" width="3" height="1" fill="#c00000"/>
<rect x="1075" y="169" width="6" height="1" fill="#c00000"/>
<rect x="1075" y="184" width="3" height="1" fill="#c00000"/>
<rect x="1075" y="198" width="6" height="1" fill="#c00000"/>
<rect x="1075" y="213" width="3" height="1" fill="#c00000"/>
<rect x="1075" y="227" width="6" height="1" fill="#c00000"/>
<rect x="1075" y="242" width="3" height="1" fill="#c00000"/>
<rect x="1075" y="256" width="6" height="1" fill="#c00000"/>
<rect x="1075" y="271" width="3" height="1" fill="#c00000"/>
<rect x="1075" y="285" width="6" height="1" fill="#c00000"/>
<rect x="1075" y="300" width="3" height="1" fill="#c00000"/>
<rect x="1075" y="314" width="6" height="1" fill="#c00000"/>
<rect x="1075" y="329" width="3" height="1" fill="#c00000"/>
<rect x="1075" y="343" width="6" height="1" fill="#c00000"/>
<rect x="1075" y="358" width="3" height="1" fill="#c00000"/>
<rect x="1075" y="372" width="6" height="1" fill="#c00000"/>
<rect x="1075" y="417" width="6" height="1" fill="#c00000"/>
<rect x="1075" y="438" width="3" height="1" fill="#c00000"/>
<rect x="1075" y="458" width="6" height="1" fill="#c00000"/>
<rect x="1075" y="479" width="3" height="1" fill="#c00000"/>
<rect x="1075" y="500" width="6" height="1" fill="#c00000"/>
<rect x="1075" y="521" width="3" height="1" fill="#c00000"/>
<rect x="1075" y="542" width="6" height="1" fill="#c00000"/>
<rect x="1075" y="563" width="3" height="1" fill="#c00000"/>
<rect x="1075" y="584" width="6" height="1" fill="#c00000"/>
<rect x="1075" y="605" width="3" height="1" fill="#c00000"/>
<rect x="0" y="630" width="1075" height="1" fill="#c00000"/>
<rect x="0" y="646" width="1130" height="1" fill="#c00000"/>
<rect x="138" y="630" width="1" height="16" fill="#c00000"/>
<rect x="281" y="630" width="1" height="16" fill="#c00000"/>
<rect x="424" y="630" width="1" height="16" fill="#c00000"/>
<rect x="553" y="630" width="1" height="16" fill="#c00000"/>
<rect x="689" y="630" width="1" height="16" fill="#c00000"/>
<rect x="846" y="630" width="1" height="16" fill="#c00000"/>
<rect x="174" y="630" width="1" height="3" fill="#c00000"/>
<rect x="210" y="630" width="1" height="3" fill="#c00000"/>
<rect x="245" y="630" width="1" height="3" fill="#c00000"/>
<rect x="317" y="630" width="1" height="3" fill="#c00000"/>
<rect x="353" y="630" width="1" height="3" fill="#c00000"/>
<rect x="388" y="630" width="1" height="3" fill="#c00000"/>
<rect x="456" y="630" width="1" height="3" fill="#c00000"/>
<rect x="489" y="630" width="1" height="3" fill="#c00000"/>
<rect x="521" y="630" width="1" height="3" fill="#c00000"/>
<rect x="587" y="630" width="1" height="3" fill="#c00000"/>
<rect x="621" y="630" width="1" height="3" fill="#c00000"/>
<rect x="655" y="630" width="1" height="3" fill="#c00000"/>
<rect x="807" y="630" width="1" height="3" fill="#c00000"/>
<rect x="882" y="630" width="1" height="3" fill="#c00000"/>
<rect x="917" y="630" width="1" height="3" fill="#c00000"/>
<rect x="953" y="630" width="1" height="3" fill="#c00000"/>
<rect x="0" y="646" width="1" height="4" fill="#c00000"/>
<rect x="42" y="646" width="1" height="4" fill="#c00000"/>
<rect x="73" y="646" width="1" height="4" fill="#c00000"/>
<rect x="115" y="646" width="1" height="4" fill="#c00000"/>
<rect x="144" y="646" width="1" height="4" fill="#c00000"/>
<rect x="177" y="646" width="1" height="4" fill="#c00000"/>
<rect x="207" y="646" width="1" height="4" fill="#c00000"/>
<rect x="241" y="646" width="1" height="4" fill="#c00000"/>
<rect x="282" y="646" width="1" height="4" fill="#c00000"/>
<rect x="308" y="646" width="1" height="4" fill="#c00000"/>
<rect x="332" y="646" width="1" height="4" fill="#c00000"/>
<rect x="364" y="646" width="1" height="4" fill="#c00000"/>
<rect x="390" y="646" width="1" height="4" fill="#c00000"/>
<rect x="422" y="646" width="1" height="4" fill="#c00000"/>
<rect x="480" y="646" width="1" height="4" fill="#c00000"/>
<rect x="508" y="646" width="1" height="4" fill="#c00000"/>
<rect x="536" y="646" width="1" height="4" fill="#c00000"/>
<rect x="568" y="646" width="1" height="4" fill="#c00000"/>
<rect x="599" y="646" width="1" height="4" fill="#c00000"/>
<rect x="628" y="646" width="1" height="4" fill="#c00000"/>
<rect x="663" y="646" width="1" height="4" fill="#c00000"/>
<rect x="696" y="646" width="1" height="4" fill="#c00000"/>
<rect x="735" y="646" width="1" height="4" fill="#c00000"/>
<rect x="766" y="646" width="1" height="4" fill="#c00000"/>
<rect x="807" y="646" width="1" height="4" fill="#c00000"/>
<rect x="839" y="646" width="1" height="4" fill="#c00000"/>
<rect x="871" y="646" width="1" height="4" fill="#c00000"/>
<text x="27" y="14" fill="#c0c0c0" font-size="12" text-anchor="start" font-weight="normal" >分时</text>
<text x="61" y="14" fill="#c0c0c0" font-size="12" text-anchor="start" font-weight="normal" >1分钟</text>
<text x="100" y="14" fill="#c0c0c0" font-size="12" text-anchor="start" font-weight="normal" >5分钟</text>
<text x="139" y="14" fill="#c0c0c0" font-size="12" text-anchor="start" font-weight="normal" >15分钟</text>
<text x="185" y="14" fill="#c0c0c0" font-size="12" text-anchor="start" font-weight="normal" >30分钟</text>
<text x="231" y="14" fill="#c0c0c0" font-size="12" text-anchor="start" font-weight="normal" >60分钟</text>
<text x="312" y="14" fill="#c0c0c0" font-size="12" text-anchor="start" font-weight="normal" >周线</text>
<text x="345" y="14" fill="#c0c0c0" font-size="12" text-anchor="start" font-weight="normal" >月线</text>
<text x="378" y="14" fill="#c0c0c0" font-size="12" text-anchor="start" font-weight="normal" >多周期</text>
<text x="422" y="14" fill="#c0c0c0" font-size="12" text-anchor="start" font-weight="normal" >更多</text>
<text x="278" y="14" fill="#54ffff" font-size="12" text-anchor="start" font-weight="normal" >日线</text>
<polyline points="449.5,4.5 453.5,9 449.5,13.5" fill="none" stroke="#c0c0c0" stroke-width="1" shape-rendering="auto"/>
<text x="827.5" y="14" fill="#c0c0c0" font-size="12" text-anchor="middle" font-weight="normal" >复权</text>
<text x="862.0" y="14" fill="#c0c0c0" font-size="12" text-anchor="middle" font-weight="normal" >叠加</text>
<text x="897.0" y="14" fill="#c0c0c0" font-size="12" text-anchor="middle" font-weight="normal" >多股</text>
<text x="932.0" y="14" fill="#c0c0c0" font-size="12" text-anchor="middle" font-weight="normal" >统计</text>
<text x="967.0" y="14" fill="#c0c0c0" font-size="12" text-anchor="middle" font-weight="normal" >画线</text>
<text x="1002.0" y="14" fill="#c0c0c0" font-size="12" text-anchor="middle" font-weight="normal" >F10</text>
<text x="1037.0" y="14" fill="#c0c0c0" font-size="12" text-anchor="middle" font-weight="normal" >标记</text>
<text x="1072.0" y="14" fill="#c0c0c0" font-size="12" text-anchor="middle" font-weight="normal" >+自选</text>
<text x="1108.0" y="14" fill="#c0c0c0" font-size="12" text-anchor="middle" font-weight="normal" >返回</text>
<rect x="5.5" y="3.5" width="11" height="10" rx="2" fill="none" stroke="#8c8c8c" stroke-width="1" shape-rendering="auto"/>
<rect x="12" y="5" width="3" height="7" fill="#8c8c8c"/>
<text x="2" y="34" fill="#c0c0c0" font-size="12" text-anchor="start" font-weight="normal" >科达利(日线.前复权)</text>
<circle cx="122.5" cy="29.5" r="6" fill="#707070" shape-rendering="auto"/>
<polyline points="119.5,28 122.5,31 125.5,28" fill="none" stroke="#111" stroke-width="1.5" shape-rendering="auto"/>
<polygon points="1047.5,24 1053,29.5 1047.5,35 1042,29.5" fill="none" stroke="#8c8c8c" stroke-width="1" shape-rendering="auto"/>
<rect x="1060.5" y="24.5" width="11" height="10" rx="2" fill="none" stroke="#8c8c8c" stroke-width="1" shape-rendering="auto"/>
<rect x="1067" y="26" width="3" height="7" fill="#8c8c8c"/>
<text x="1120.5" y="56.5" fill="#ff3c3c" font-size="12" text-anchor="end" font-weight="normal" >150.0</text>
<text x="1120.5" y="85.5" fill="#ff3c3c" font-size="12" text-anchor="end" font-weight="normal" >145.0</text>
<text x="1120.5" y="114.5" fill="#ff3c3c" font-size="12" text-anchor="end" font-weight="normal" >140.0</text>
<text x="1120.5" y="144.5" fill="#ff3c3c" font-size="12" text-anchor="end" font-weight="normal" >135.0</text>
<text x="1120.5" y="173.5" fill="#ff3c3c" font-size="12" text-anchor="end" font-weight="normal" >130.0</text>
<text x="1120.5" y="202.5" fill="#ff3c3c" font-size="12" text-anchor="end" font-weight="normal" >125.0</text>
<text x="1120.5" y="231.5" fill="#ff3c3c" font-size="12" text-anchor="end" font-weight="normal" >120.0</text>
<text x="1120.5" y="260.5" fill="#ff3c3c" font-size="12" text-anchor="end" font-weight="normal" >115.0</text>
<text x="1120.5" y="289.5" fill="#ff3c3c" font-size="12" text-anchor="end" font-weight="normal" >110.0</text>
<text x="1120.5" y="318.5" fill="#ff3c3c" font-size="12" text-anchor="end" font-weight="normal" >105.0</text>
<text x="1120.5" y="347.5" fill="#ff3c3c" font-size="12" text-anchor="end" font-weight="normal" >100.0</text>
<text x="1120.5" y="376.5" fill="#ff3c3c" font-size="12" text-anchor="end" font-weight="normal" >95.00</text>
<text x="1120.5" y="421.5" fill="#ff3c3c" font-size="12" text-anchor="end" font-weight="normal" >100.0</text>
<text x="1120.5" y="462.5" fill="#ff3c3c" font-size="12" text-anchor="end" font-weight="normal" >80.00</text>
<text x="1120.5" y="504.5" fill="#ff3c3c" font-size="12" text-anchor="end" font-weight="normal" >60.00</text>
<text x="1120.5" y="546.5" fill="#ff3c3c" font-size="12" text-anchor="end" font-weight="normal" >40.00</text>
<text x="1120.5" y="588.5" fill="#ff3c3c" font-size="12" text-anchor="end" font-weight="normal" >20.00</text>
<rect x="1077" y="430" width="48" height="17" fill="#c00000"/>
<rect x="1077" y="431" width="48" height="15" fill="#000090"/>
<text x="1077" y="442" fill="#d8d8d8" font-size="12" text-anchor="start" font-weight="normal" >85.70</text>
<text x="991" y="50" fill="#c0c0c0" font-size="12" text-anchor="start" font-weight="normal" >152.13</text>
<polyline points="1030,44.5 1048,41.5" fill="none" stroke="#c0c0c0" stroke-width="1"/>
<polyline points="1044,39.5 1048,40 1049.5,41 1048,42.5 1045.5,44.5" fill="none" stroke="#c0c0c0" stroke-width="1" shape-rendering="auto"/>
<text x="323" y="383" fill="#c0c0c0" font-size="12" text-anchor="start" font-weight="normal" >94.10</text>
<line x1="310" y1="377.5" x2="321" y2="377.5" stroke="#c0c0c0" stroke-width="1"/>
<polyline points="313,374.5 310,377.5 313,380.5" fill="none" stroke="#c0c0c0" stroke-width="1" shape-rendering="auto"/>
<polygon points="295,382 305,382 308,385 308,395 295,395" fill="#008a00"/>
<text x="301.5" y="393.5" fill="#ffffff" font-size="12" text-anchor="middle" font-weight="normal" >跌</text>
<polygon points="542.5,387.6 545.5,384 548.5,387.6" fill="#ff1010" shape-rendering="auto"/>
<path d="M548.5,388.5 H544.5 L543.5,389.5 V390.5 L544.5,391.5 H547.5 L548.5,392.5 V393.5 L547.5,394.5 H543" fill="none" stroke="#ff1010" stroke-width="1.3" shape-rendering="auto"/>
<rect x="914" y="382" width="13" height="13" fill="#0a3c80"/>
<text x="920.5" y="393.5" fill="#ffffff" font-size="12" text-anchor="middle" font-weight="normal" >财</text>
<polygon points="929,382 939,382 942,385 942,395 929,395" fill="#008a00"/>
<text x="935.5" y="393.5" fill="#ffffff" font-size="12" text-anchor="middle" font-weight="normal" >减</text>
<circle cx="8" cy="405.5" r="6" fill="#707070" shape-rendering="auto"/>
<polyline points="5,404 8,407 11,404" fill="none" stroke="#111" stroke-width="1.5" shape-rendering="auto"/>
<text x="18" y="410" fill="#c0c0c0" font-size="12" text-anchor="start" font-weight="normal" >股朋指标网</text>
<text x="83" y="410.5" fill="#e8e8e8" font-size="12" text-anchor="start" font-weight="normal" >A: 100.00</text>
<text x="139" y="410.5" fill="#ffff00" font-size="12" text-anchor="start" font-weight="normal" >B: 100.00</text>
<text x="196" y="410" fill="#ff00ff" font-size="12" text-anchor="start" font-weight="normal" >介入: 0.00</text>
<text x="4" y="643" fill="#ff3c3c" font-size="12" text-anchor="start" font-weight="normal" >2025年</text>
<text x="140" y="643" fill="#ff3c3c" font-size="12" text-anchor="start" font-weight="normal" >3</text>
<text x="283" y="643" fill="#ff3c3c" font-size="12" text-anchor="start" font-weight="normal" >4</text>
<text x="426" y="643" fill="#ff3c3c" font-size="12" text-anchor="start" font-weight="normal" >5</text>
<text x="555" y="643" fill="#ff3c3c" font-size="12" text-anchor="start" font-weight="normal" >6</text>
<text x="691" y="643" fill="#ff3c3c" font-size="12" text-anchor="start" font-weight="normal" >7</text>
<text x="848" y="643" fill="#ff3c3c" font-size="12" text-anchor="start" font-weight="normal" >8</text>
<rect x="729" y="631" width="78" height="15" fill="#000090"/>
<text x="730" y="643" fill="#d8d8d8" font-size="12" text-anchor="start" font-weight="normal" >2025/07/09/三</text>
<rect x="984" y="600" width="146" height="50" fill="#000"/>
<text x="1062" y="621" fill="#ffffff" font-size="18" text-anchor="middle" font-weight="bold" >股朋指标网</text>
<text x="1057" y="639" fill="#f0f0f0" font-size="17" text-anchor="middle" font-weight="normal" letter-spacing="0.75">www.7gpzb.com</text></g>
</svg>
</body></html>
